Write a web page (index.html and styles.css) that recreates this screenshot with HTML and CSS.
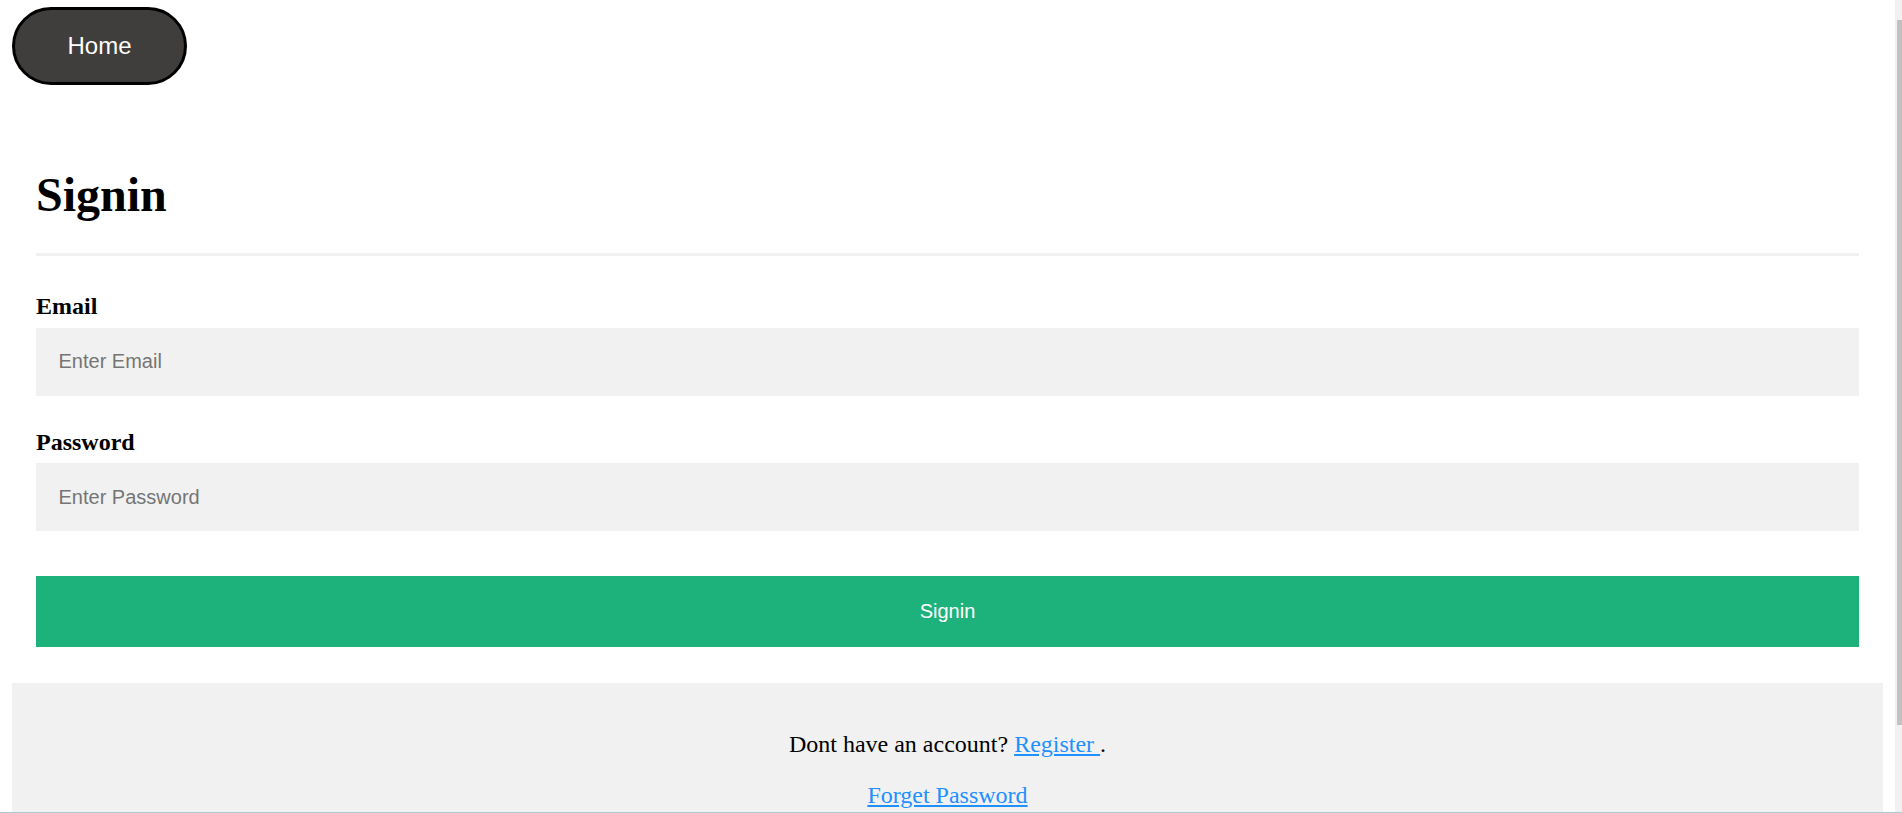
FILE: index.html
```html
<!DOCTYPE html>
<html lang="en">
<head>
<meta charset="utf-8">
<title>Signin</title>
<link rel="stylesheet" href="styles.css">
</head>
<body>
<nav class="topnav">
  <a class="home-btn" href="#">Home</a>
</nav>
<form class="signin-form">
  <div class="container">
    <h1 class="title">Signin</h1>
    <hr class="divider">
    <label class="field-label" for="email"><b>Email</b></label>
    <input class="field-input" type="text" id="email" placeholder="Enter Email">
    <label class="field-label" for="psw"><b>Password</b></label>
    <input class="field-input" type="password" id="psw" placeholder="Enter Password">
    <button class="submit-btn" type="button">Signin</button>
  </div>
  <div class="footer-box">
    <p class="footer-line">Dont have an account? <a class="link" href="#">Register </a>.</p>
    <p class="footer-line"><a class="link" href="#">Forget Password</a></p>
  </div>
</form>
<div class="fake-scrollbar" aria-hidden="true"><div class="fake-thumb"></div></div>
<div class="window-edge" aria-hidden="true"></div>
</body>
</html>
```

FILE: styles.css
```css
body {
  margin: 7px 19px 12px 12px;
  font-family: "Liberation Serif", "Times New Roman", serif;
  background: #ffffff;
  color: #000;
}
.topnav {
  display: flex;
  margin-bottom: 26px;
}
.home-btn {
  box-sizing: border-box;
  display: flex;
  align-items: center;
  justify-content: center;
  width: 175px;
  height: 78px;
  background: #403e3d;
  border: 3px solid #000;
  border-radius: 40px;
  color: #fff;
  font-family: "Liberation Sans", Arial, sans-serif;
  font-size: 24px;
  text-decoration: none;
}
.container {
  padding: 24px;
}
.title {
  font-size: 48px;
  font-weight: bold;
  margin: 32px 0 31px 0;
}
.divider {
  border: none;
  height: 3px;
  background: #f1f1f1;
  margin: 0 0 37px 0;
}
.field-label {
  display: block;
  font-size: 24px;
}
.field-input {
  display: block;
  box-sizing: border-box;
  width: 100%;
  padding: 22.5px;
  margin: 7.5px 0 33px 0;
  border: none;
  background: #f1f1f1;
  font-family: "Liberation Sans", Arial, sans-serif;
  font-size: 20px;
  line-height: 23px;
  color: #000;
  outline: none;
}
.field-input::placeholder {
  color: #757575;
}
.submit-btn {
  display: block;
  width: 100%;
  margin: 45px 0 12px 0;
  padding: 24px 30px;
  border: none;
  background: #1db27c;
  color: #fff;
  font-family: "Liberation Sans", Arial, sans-serif;
  font-size: 20px;
  line-height: 23px;
  cursor: pointer;
}
.footer-box {
  background: #f1f1f1;
  padding: 24px;
  text-align: center;
}
.footer-line {
  font-size: 24px;
  margin: 24px 0;
}
.link {
  color: dodgerblue;
}
.fake-scrollbar {
  position: fixed;
  top: 0;
  right: 0;
  bottom: 0;
  width: 7px;
  background: #f1f1f1;
}
.fake-thumb {
  margin: 20px 0 0 2px;
  height: 705px;
  background: #c1c1c1;
}
.window-edge {
  position: fixed;
  left: 0;
  right: 0;
  bottom: 0;
  height: 1px;
  background: #a6cbd3;
}
```
